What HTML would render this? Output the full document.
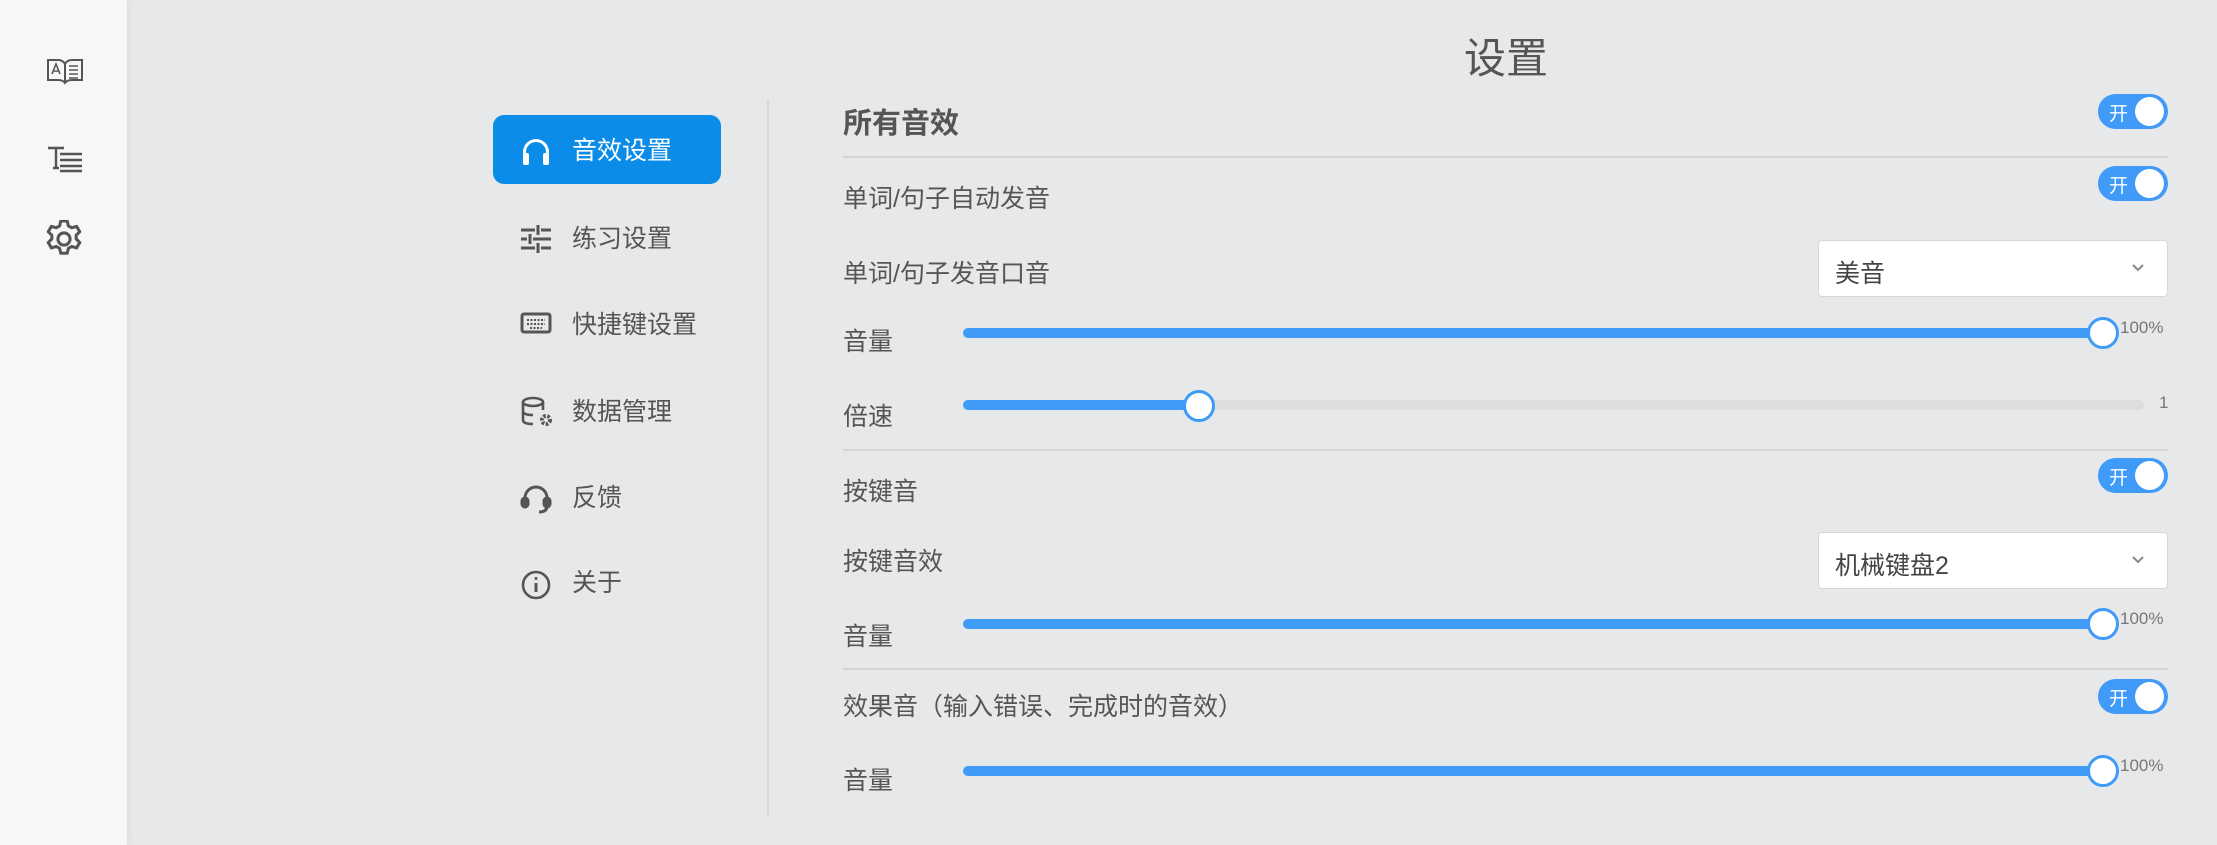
<!DOCTYPE html>
<html><head><meta charset="utf-8"><style>
*{margin:0;padding:0;box-sizing:border-box}
body{width:2217px;height:845px;background:#e7e8ea;font-family:"Liberation Sans","Noto Sans CJK SC",sans-serif;color:#555;position:relative;overflow:hidden}
.side{position:absolute;left:0;top:0;width:127px;height:845px;background:#f7f7f7;box-shadow:2px 0 6px rgba(0,0,0,.05)}
.a{position:absolute}
.t{position:absolute;font-size:25px;line-height:1;white-space:nowrap}
.mi{position:absolute;left:572px;font-size:25px;color:#555;line-height:1}
.ic{position:absolute;left:520px}
.line{position:absolute;left:843px;width:1325px;height:2px;background:#d3d4d6}
.tg{position:absolute;left:2098px;width:70px;height:35px;border-radius:18px;background:#3f9bf7}
.tg span{position:absolute;left:11px;top:5px;color:#fff;font-size:19px}
.tg i{position:absolute;right:4px;top:3px;width:29px;height:29px;border-radius:50%;background:#fff}
.sel{position:absolute;left:1818px;width:350px;height:57px;background:#fff;border:1px solid #d6d7d9;border-radius:4px}
.sel span{position:absolute;left:16px;top:13px;font-size:25px;color:#444}
.sel svg{position:absolute;right:22px;top:22px}
.tr{position:absolute;left:963px;height:10px;border-radius:5px;background:#3f9bf7}
.bg{background:#dcdddf}
.th{position:absolute;width:32px;height:32px;border-radius:50%;background:#fff;border:3px solid #3f9bf7}
.pc{position:absolute;font-size:17px;color:#777}
</style></head><body>
<div class="side"></div>
<svg class="a" style="left:46px;top:57px" width="38" height="28" viewBox="0 0 38 28" fill="none" stroke="#555" stroke-width="2"><path d="M2 3h10q5 0 7 4q2-4 7-4h10v20H26q-5 0-7 3q-2-3-7-3H2z"/><path d="M19 7v19"/><path d="M6 17l4-10l4 10M7.5 14h5" stroke-width="1.6"/><path d="M23 9h9M23 13h9M23 17h9M23 21h9" stroke-width="1.6"/></svg>
<svg class="a" style="left:46px;top:145px" width="38" height="28" viewBox="0 0 38 28" fill="none" stroke="#555" stroke-width="2.4"><path d="M2 3h16M10 3v20M7 23h6"/><path d="M14 9h22M14 15h22M14 21h22M14 26h22"/></svg>
<svg class="a" style="left:45px;top:220px" width="38" height="38" viewBox="2 2 20 20" fill="none" stroke="#555" stroke-width="1.6" stroke-linejoin="round"><circle cx="12" cy="12" r="3.2"/><path d="M10.3 2.5h3.4l.6 2.6 1.8 1 2.5-.8 1.7 2.9-1.9 1.8v2l1.9 1.8-1.7 2.9-2.5-.8-1.8 1-.6 2.6h-3.4l-.6-2.6-1.8-1-2.5.8-1.7-2.9 1.9-1.8v-2L3.7 8.2l1.7-2.9 2.5.8 1.8-1z"/></svg>

<div class="t" style="left:1506px;top:38px;font-size:42px;color:#555;transform:translateX(-50%)">设置</div>

<div class="a" style="left:493px;top:115px;width:228px;height:69px;border-radius:11px;background:#0b8ce8"></div>
<svg class="ic" style="top:136px" width="32" height="30" viewBox="0 0 32 30" fill="#fff"><path d="M3 24V16a13 13 0 0 1 26 0v8h-3V16a10 10 0 0 0-20 0v8z"/><rect x="3" y="17" width="6" height="12" rx="2"/><rect x="23" y="17" width="6" height="12" rx="2"/></svg>
<div class="mi" style="top:139px;color:#fff">音效设置</div>

<svg class="ic" style="top:224px" width="32" height="30" viewBox="0 0 32 30" stroke="#555" stroke-width="3" fill="none"><path d="M1 6h14M21 6h10M18 1v10M1 15h6M13 15h18M10 10v10M1 24h14M21 24h10M18 19v10"/></svg>
<div class="mi" style="top:227px">练习设置</div>

<svg class="ic" style="top:312px" width="32" height="24" viewBox="0 0 32 24" fill="none" stroke="#555" stroke-width="3"><rect x="2" y="2" width="28" height="18" rx="2"/><path d="M7 8h18M7 12h18M10 16h12" stroke-width="2" stroke-dasharray="2 1.5"/></svg>
<div class="mi" style="top:313px">快捷键设置</div>

<svg class="ic" style="top:396px" width="34" height="32" viewBox="0 0 34 32" fill="none" stroke="#555" stroke-width="2.6"><ellipse cx="13" cy="6" rx="10" ry="4"/><path d="M3 6v18q0 4 10 4M3 15q0 4 10 4M23 6v8"/><circle cx="26" cy="24" r="4" stroke-width="4" stroke-dasharray="2.5 1.5"/></svg>
<div class="mi" style="top:400px">数据管理</div>

<svg class="ic" style="top:483px" width="32" height="32" viewBox="0 0 32 32" fill="none" stroke="#555" stroke-width="3"><path d="M5 18v-3a11 11 0 0 1 22 0v3"/><rect x="2" y="15" width="6" height="9" rx="3" fill="#555"/><rect x="24" y="15" width="6" height="9" rx="3" fill="#555"/><path d="M27 23q0 6-8 6"/></svg>
<div class="mi" style="top:486px">反馈</div>

<svg class="ic" style="top:569px" width="32" height="32" viewBox="0 0 32 32" fill="none" stroke="#555" stroke-width="2.6"><circle cx="16" cy="16" r="13"/><path d="M16 14v9" stroke-width="3"/><circle cx="16" cy="9.5" r="1.5" fill="#555" stroke="none"/></svg>
<div class="mi" style="top:571px">关于</div>

<div class="a" style="left:767px;top:99px;width:2px;height:717px;background:#d6d7d9"></div>

<div class="t" style="left:843px;top:110px;font-size:29px;font-weight:bold;color:#555">所有音效</div>
<div class="tg" style="top:94px"><span>开</span><i></i></div>
<div class="line" style="top:156px"></div>

<div class="t" style="left:843px;top:187px">单词/句子自动发音</div>
<div class="tg" style="top:166px"><span>开</span><i></i></div>

<div class="t" style="left:843px;top:262px">单词/句子发音口音</div>
<div class="sel" style="top:240px"><span>美音</span><svg width="14" height="10" viewBox="0 0 14 10" fill="none" stroke="#888" stroke-width="2"><path d="M2 2l5 5 5-5"/></svg></div>

<div class="t" style="left:843px;top:330px">音量</div>
<div class="tr" style="top:328px;width:1140px"></div>
<div class="th" style="left:2087px;top:317px"></div>
<div class="pc" style="left:2120px;top:318px">100%</div>

<div class="t" style="left:843px;top:405px">倍速</div>
<div class="tr bg" style="top:400px;width:1181px"></div>
<div class="tr" style="top:400px;width:236px"></div>
<div class="th" style="left:1183px;top:390px"></div>
<div class="pc" style="left:2159px;top:393px">1</div>

<div class="line" style="top:449px"></div>

<div class="t" style="left:843px;top:480px">按键音</div>
<div class="tg" style="top:458px"><span>开</span><i></i></div>

<div class="t" style="left:843px;top:550px">按键音效</div>
<div class="sel" style="top:532px"><span>机械键盘2</span><svg width="14" height="10" viewBox="0 0 14 10" fill="none" stroke="#888" stroke-width="2"><path d="M2 2l5 5 5-5"/></svg></div>

<div class="t" style="left:843px;top:625px">音量</div>
<div class="tr" style="top:619px;width:1140px"></div>
<div class="th" style="left:2087px;top:608px"></div>
<div class="pc" style="left:2120px;top:609px">100%</div>

<div class="line" style="top:668px"></div>

<div class="t" style="left:843px;top:695px">效果音（输入错误、完成时的音效）</div>
<div class="tg" style="top:679px"><span>开</span><i></i></div>

<div class="t" style="left:843px;top:769px">音量</div>
<div class="tr" style="top:766px;width:1140px"></div>
<div class="th" style="left:2087px;top:755px"></div>
<div class="pc" style="left:2120px;top:756px">100%</div>
</body></html>
